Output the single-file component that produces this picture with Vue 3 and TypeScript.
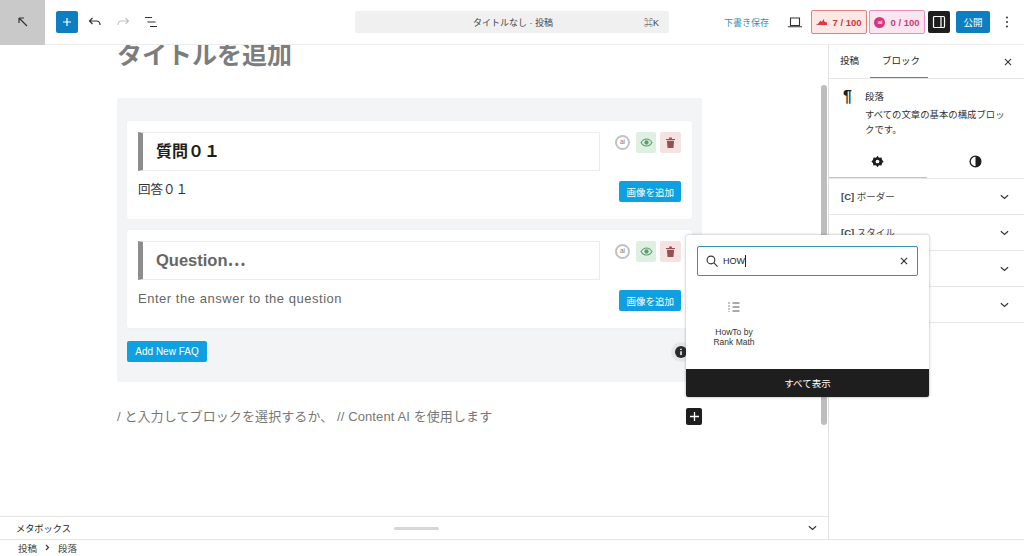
<script setup lang="ts">
const faqs = [
  { id: 1, question: '質問０１', answer: '回答０１', filled: true },
  { id: 2, question: 'Question⋯', answer: 'Enter the answer to the question', filled: false },
]
const panels = [
  { tag: '[C]', label: 'ボーダー' },
  { tag: '[C]', label: 'スタイル' },
  { tag: '', label: '' },
  { tag: '', label: '' },
]
</script>

<template>
  <div class="app">
    <header class="topbar">
      <div class="back">
        <svg width="12" height="12" viewBox="0 0 12 12"><path d="M2 2l8 8M2 2h5M2 2v5" fill="none" stroke="#333" stroke-width="1.2" /></svg>
      </div>
      <div class="tools">
        <button class="add">
          <svg width="10" height="10" viewBox="0 0 10 10"><path d="M5 1v8M1 5h8" stroke="#fff" stroke-width="1.2" /></svg>
        </button>
        <svg class="tool" width="16" height="14" viewBox="0 0 16 14"><path d="M5.500 3L2.500 6l3 3M2.500 6h7c2.500 0 3.500 1.500 3.500 4" fill="none" stroke="#333" stroke-width="1.2" /></svg>
        <svg class="tool" width="16" height="14" viewBox="0 0 16 14"><path d="M10.500 3l3 3-3 3M13.500 6h-7C4 6 3 7.500 3 10" fill="none" stroke="#c0c0c0" stroke-width="1.1" /></svg>
        <svg class="tool" width="16" height="14" viewBox="0 0 16 14"><path d="M2 2.500h7M4.500 7h8M7 11.500h7" fill="none" stroke="#333" stroke-width="1.2" /></svg>
      </div>
      <div class="command">
        <span class="command-title">タイトルなし · 投稿</span>
        <span class="command-key">⌘K</span>
      </div>
      <div class="actions">
        <span class="save">下書き保存</span>
        <svg class="laptop" width="14" height="11" viewBox="0 0 14 11"><path d="M2.500 1h9v7.500h-9zM0 9.800h14" fill="none" stroke="#333" stroke-width="1.1" /></svg>
        <div class="score score-red">
          <svg width="11" height="7" viewBox="0 0 13 8"><path d="M0 7l3-2 2-3 2 1 2-3 1 3 3 1v3z" fill="#e0363c" /></svg>
          <span>7 / 100</span>
        </div>
        <div class="score score-pink">
          <span class="ai-dot">ai</span>
          <span>0 / 100</span>
        </div>
        <div class="panel-toggle">
          <svg width="14" height="14" viewBox="0 0 14 14"><rect x="1.500" y="1.500" width="11" height="11" rx="1" fill="none" stroke="#fff" stroke-width="1.200" /><path d="M9 2v10" stroke="#fff" stroke-width="1.200" /></svg>
        </div>
        <button class="publish">公開</button>
        <svg class="more" width="4" height="12" viewBox="0 0 4 12"><circle cx="2" cy="1.500" r="1" /><circle cx="2" cy="6" r="1" /><circle cx="2" cy="10.500" r="1" /></svg>
      </div>
    </header>

    <div class="body">
      <div class="left">
        <main class="editor">
          <div class="content">
            <h1 class="title">タイトルを追加</h1>
            <section class="faq">
              <article v-for="faq in faqs" :key="faq.id" class="card">
                <div class="card-main">
                  <div class="question" :class="{ empty: !faq.filled }">{{ faq.question }}</div>
                  <div class="answer" :class="{ empty: !faq.filled }">{{ faq.answer }}</div>
                </div>
                <div class="card-side">
                  <div class="card-icons">
                    <span class="ai-grey">ai</span>
                    <span class="icon-box green">
                      <svg width="13" height="9" viewBox="0 0 14 10"><path d="M1 5c3-5.300 9-5.300 12 0-3 5.300-9 5.300-12 0z" fill="none" stroke="#5b9e6c" stroke-width="1.200" /><circle cx="7" cy="5" r="2.400" fill="#5b9e6c" /></svg>
                    </span>
                    <span class="icon-box red">
                      <svg width="9" height="11" viewBox="0 0 10 12"><path d="M0 2h10v1.200H0zM3.500 0.500h3V2h-3zM1 4h8l-.7 8H1.700z" fill="#96504f" /></svg>
                    </span>
                  </div>
                  <button class="blue-btn">画像を追加</button>
                </div>
              </article>
              <div class="faq-foot">
                <button class="blue-btn wide">Add New FAQ</button>
                <span class="info">
                  <svg width="12" height="12" viewBox="0 0 12 12"><circle cx="6" cy="6" r="6" fill="#2b2b2b" /><path d="M6 5.200v3.800M6 2.800v1.200" stroke="#fff" stroke-width="1.500" /></svg>
                </span>
              </div>
            </section>
            <div class="appender">
              <p class="placeholder">/ と入力してブロックを選択するか、 // Content AI を使用します</p>
              <button class="dark-plus">
                <svg width="9" height="9" viewBox="0 0 10 10"><path d="M5 0v10M0 5h10" stroke="#fff" stroke-width="1.400" /></svg>
              </button>
            </div>
          </div>
          <div class="scrolltrack"><div class="scrollthumb"></div></div>
        </main>
        <div class="metabox">
          <span>メタボックス</span>
          <span class="handle"></span>
          <svg class="meta-chevron" width="9" height="6" viewBox="0 0 10 6"><path d="M1 1l4 3.500L9 1" fill="none" stroke="#333" stroke-width="1.300" /></svg>
        </div>
      </div>

      <aside class="sidebar">
        <div class="tabs">
          <span class="tab">投稿</span>
          <span class="tab active">ブロック</span>
          <svg class="close" width="8" height="8" viewBox="0 0 9 9"><path d="M1 1l7 7M8 1L1 8" stroke="#333" stroke-width="1.200" /></svg>
        </div>
        <div class="block-card">
          <span class="pilcrow">¶</span>
          <div>
            <div class="block-name">段落</div>
            <div class="block-desc">すべての文章の基本の構成ブロックです。</div>
          </div>
        </div>
        <div class="subtabs">
          <div class="subtab active">
            <svg width="13" height="13" viewBox="0 0 14 14"><path d="M7 .8l1.600 2.200 2.700-.2.700 2.600L13.600 7 12 8.600l-.7 2.600-2.700-.2L7 13.200 5.400 11l-2.700.2L2 8.600.4 7 2 5.400l.7-2.600 2.700.2z" fill="#1e1e1e" /><circle cx="7" cy="7" r="2" fill="#fff" /></svg>
          </div>
          <div class="subtab">
            <svg width="13" height="13" viewBox="0 0 14 14"><circle cx="7" cy="7" r="5.800" fill="none" stroke="#1e1e1e" stroke-width="1.400" /><path d="M7 1.200a5.800 5.800 0 0 1 0 11.600z" fill="#1e1e1e" /></svg>
          </div>
        </div>
        <div v-for="(panel, i) in panels" :key="i" class="panel">
          <span class="panel-label"><b class="panel-tag">{{ panel.tag }}</b> {{ panel.label }}</span>
          <svg width="9" height="6" viewBox="0 0 10 6"><path d="M1 1l4 3.500L9 1" fill="none" stroke="#333" stroke-width="1.300" /></svg>
        </div>
      </aside>
    </div>

    <footer class="crumbs">
      <span>投稿</span>
      <svg width="5" height="7" viewBox="0 0 5 7"><path d="M1 .8l2.500 2.700L1 6.200" fill="none" stroke="#333" stroke-width="1.200" /></svg>
      <span>段落</span>
    </footer>

    <div class="inserter">
      <div class="search">
        <svg width="12" height="12" viewBox="0 0 14 14"><circle cx="5.800" cy="5.800" r="4.500" fill="none" stroke="#333" stroke-width="1.300" /><path d="M9 9l4.500 4.500" stroke="#333" stroke-width="1.300" /></svg>
        <span class="search-text">HOW<i class="caret"></i></span>
        <svg width="8" height="8" viewBox="0 0 9 9"><path d="M1 1l7 7M8 1L1 8" stroke="#333" stroke-width="1.300" /></svg>
      </div>
      <div class="results">
        <div class="result">
          <svg width="12" height="12" viewBox="0 0 12 12"><path d="M4.500 2h7M4.500 6h7M4.500 10h7" stroke="#555" stroke-width="1" /><path d="M1 1v10" stroke="#888" stroke-width="1" stroke-dasharray="2 1" /></svg>
          <span>HowTo by<br />Rank Math</span>
        </div>
      </div>
      <div class="show-all">すべて表示</div>
    </div>
  </div>
</template>

<style scoped>
.app {
  position: relative;
  width: 1024px;
  height: 556px;
  overflow: hidden;
  display: flex;
  flex-direction: column;
  background: #fff;
  color: #1e1e1e;
  font-family: "Liberation Sans", "Noto Sans CJK JP", sans-serif;
}

.topbar {
  position: relative;
  z-index: 2;
  flex: none;
  height: 45px;
  box-sizing: border-box;
  display: flex;
  align-items: center;
  background: #fff;
  border-bottom: 1px solid #ececec;
}

.back {
  width: 45px;
  height: 45px;
  flex: none;
  display: flex;
  align-items: center;
  justify-content: center;
  background: #c9c9c9;
}

.tools {
  width: 310px;
  flex: none;
  box-sizing: border-box;
  padding-left: 11px;
  display: flex;
  align-items: center;
}

.add {
  width: 22px;
  height: 22px;
  padding: 0;
  border: 0;
  border-radius: 2px;
  background: #0d7fc0;
  display: flex;
  align-items: center;
  justify-content: center;
}

.tool {
  margin-left: 9px;
  margin-right: 3px;
}

.command {
  width: 314px;
  height: 22px;
  flex: none;
  box-sizing: border-box;
  padding: 0 10px 0 118px;
  border-radius: 3px;
  background: #f0f0f0;
  display: flex;
  align-items: center;
  justify-content: space-between;
  font-size: 9px;
  color: #444;
}

.actions {
  flex: 1;
  display: flex;
  align-items: center;
  padding-left: 55px;
}

.save {
  font-size: 9px;
  color: #3a8fb7;
  margin-right: 19px;
  white-space: nowrap;
}

.laptop {
  margin-right: 9px;
}

.score {
  width: 56px;
  height: 24px;
  box-sizing: border-box;
  display: flex;
  align-items: center;
  justify-content: center;
  gap: 5px;
  border-radius: 2px;
  font-size: 9.5px;
  font-weight: 700;
  white-space: nowrap;
}

.score-red {
  margin-right: 2px;
  background: #fde8e6;
  border: 1px solid #e0807f;
  color: #c8383c;
}

.score-pink {
  margin-right: 3px;
  background: #fbe6f0;
  border: 1px solid #e58fb9;
  color: #c83a80;
}

.ai-dot {
  width: 11px;
  height: 11px;
  border-radius: 50%;
  background: #d3387f;
  color: #fff;
  font-size: 6px;
  font-weight: 400;
  display: flex;
  align-items: center;
  justify-content: center;
}

.panel-toggle {
  width: 22px;
  height: 22px;
  border-radius: 2px;
  background: #1e1e1e;
  display: flex;
  align-items: center;
  justify-content: center;
  margin-right: 6px;
}

.publish {
  width: 34px;
  height: 22px;
  padding: 0;
  border: 0;
  border-radius: 2px;
  background: #0d7fc0;
  color: #fff;
  font-family: inherit;
  font-size: 9.5px;
  margin-right: 15px;
}

.more {
  fill: #333;
}

.body {
  flex: 1;
  min-height: 0;
  display: flex;
}

.left {
  width: 828px;
  flex: none;
  display: flex;
  flex-direction: column;
}

.editor {
  flex: 1;
  min-height: 0;
  display: flex;
}

.content {
  flex: 1;
  min-width: 0;
  padding-left: 117px;
}

.title {
  margin: 0;
  font-size: 25px;
  line-height: 21px;
  font-weight: 700;
  color: #7d7d7d;
}

.faq {
  width: 585px;
  height: 284px;
  box-sizing: border-box;
  margin-top: 32px;
  padding: 23px 10px 0;
  background: #f3f4f6;
  border-radius: 2px;
}

.card {
  height: 98px;
  box-sizing: border-box;
  margin-bottom: 11px;
  padding: 11px 11px 0;
  background: #fff;
  border-radius: 3px;
  display: flex;
  box-shadow: 0 0 2px rgba(0, 0, 0, 0.04);
}

.card-main {
  width: 462px;
  flex: none;
}

.question {
  height: 39px;
  box-sizing: border-box;
  padding-left: 13px;
  border: 1px solid #ececec;
  border-left: 5px solid #8d8d8d;
  font-size: 16px;
  font-weight: 700;
  line-height: 37px;
}

.question.empty {
  color: #666;
  font-size: 16.5px;
}

.answer {
  margin-top: 11px;
  font-size: 12.5px;
  line-height: 16px;
  color: #333;
}

.answer.empty {
  color: #666;
  font-size: 13px;
  letter-spacing: 0.53px;
}

.card-side {
  flex: 1;
  display: flex;
  flex-direction: column;
  align-items: flex-end;
}

.card-icons {
  display: flex;
  align-items: center;
  gap: 4px;
}

.ai-grey {
  width: 15px;
  height: 15px;
  margin-right: 2px;
  border-radius: 50%;
  background: #fff;
  border: 2px solid #c2c2c2;
  box-sizing: border-box;
  color: #777;
  font-size: 6.5px;
  line-height: 1;
  display: flex;
  align-items: center;
  justify-content: center;
}

.icon-box {
  width: 20px;
  height: 21px;
  border-radius: 2px;
  display: flex;
  align-items: center;
  justify-content: center;
}

.green {
  background: #dff0e2;
}

.red {
  background: #f5e3e3;
  width: 21px;
}

.blue-btn {
  height: 21px;
  padding: 0 7px;
  border: 0;
  border-radius: 2px;
  background: #0ea0e0;
  color: #fff;
  font-family: inherit;
  font-size: 9.5px;
  white-space: nowrap;
}

.blue-btn.wide {
  width: 80px;
  padding: 0;
  font-size: 10px;
}

.card-side .blue-btn {
  margin-top: 28px;
}

.faq-foot {
  margin-top: 13px;
  display: flex;
  align-items: center;
  justify-content: space-between;
}

.info {
  width: 20px;
  height: 20px;
  margin-right: 1px;
  border-radius: 50%;
  background: #e6e6e6;
  display: flex;
  align-items: center;
  justify-content: center;
}

.appender {
  width: 585px;
  margin-top: 23px;
  display: flex;
  align-items: center;
  justify-content: space-between;
}

.placeholder {
  margin: 0;
  font-size: 13px;
  letter-spacing: 0.1px;
  line-height: 24px;
  color: #777;
}

.dark-plus {
  width: 16px;
  height: 17px;
  margin-top: -2px;
  padding: 0;
  border: 0;
  border-radius: 2px;
  background: #1e1e1e;
  display: flex;
  align-items: center;
  justify-content: center;
}

.scrolltrack {
  width: 7px;
  flex: none;
  padding-top: 40px;
}

.scrollthumb {
  width: 6px;
  height: 340px;
  border-radius: 3px;
  background: #bdbdbd;
}

.metabox {
  flex: none;
  height: 23px;
  box-sizing: border-box;
  padding: 0 11px 0 16px;
  border-top: 1px solid #e6e6e6;
  display: grid;
  grid-template-columns: 1fr auto 1fr;
  align-items: center;
  font-size: 9.2px;
}

.handle {
  width: 45px;
  height: 3px;
  border-radius: 2px;
  background: #d6d6d6;
}

.meta-chevron {
  justify-self: end;
}

.sidebar {
  flex: 1;
  min-width: 0;
  border-left: 1px solid #e0e0e0;
  background: #fff;
}

.tabs {
  height: 33px;
  display: flex;
  align-items: center;
  font-size: 9.5px;
  border-bottom: 1px solid #e6e6e6;
}

.tab {
  height: 33px;
  line-height: 32px;
  box-sizing: border-box;
  padding: 0 11px;
}

.tab.active {
  width: 58px;
  padding: 0 0 0 12px;
  border-bottom: 1.5px solid #3a8fb7;
}

.close {
  margin-left: auto;
  margin-right: 12px;
}

.block-card {
  display: flex;
  height: 66px;
  box-sizing: border-box;
  padding: 10px 12px 0 14px;
  font-size: 9.4px;
  line-height: 15px;
}

.pilcrow {
  width: 22px;
  flex: none;
  font-size: 16px;
  font-weight: 700;
}

.block-desc {
  margin-top: 3px;
  color: #333;
}

.subtabs {
  height: 34px;
  box-sizing: border-box;
  display: flex;
  border-bottom: 1px solid #e6e6e6;
}

.subtab {
  width: 98px;
  box-sizing: border-box;
  display: flex;
  align-items: center;
  justify-content: center;
}

.subtab.active {
  border-bottom: 1.5px solid #a8cfe0;
}

.panel {
  height: 36px;
  box-sizing: border-box;
  padding: 0 15px 0 12px;
  border-bottom: 1px solid #e6e6e6;
  display: flex;
  align-items: center;
  justify-content: space-between;
  font-size: 9.5px;
  color: #444;
}

.panel-label {
  margin-bottom: 2px;
}

.panel-tag {
  font-weight: 700;
}

.crumbs {
  flex: none;
  height: 17px;
  box-sizing: border-box;
  padding: 0 0 1px 18px;
  border-top: 1px solid #e6e6e6;
  display: flex;
  align-items: center;
  gap: 8px;
  font-size: 9.5px;
  color: #444;
}

.inserter {
  position: absolute;
  left: 686px;
  top: 235px;
  width: 243px;
  height: 162px;
  display: flex;
  flex-direction: column;
  background: #fff;
  border-radius: 2px;
  box-shadow: 0 0 3px rgba(0, 0, 0, 0.35);
  overflow: hidden;
}

.search {
  height: 28px;
  flex: none;
  margin: 11px 11px 0;
  padding: 0 9px 0 8px;
  border: 1.5px solid #3a8fb7;
  border-radius: 2px;
  display: flex;
  align-items: center;
  gap: 5px;
  font-size: 9px;
}

.search-text {
  flex: 1;
  display: flex;
  align-items: center;
}

.caret {
  width: 1px;
  height: 12px;
  background: #1e1e1e;
}

.results {
  flex: 1;
  padding: 25px 0 0 5px;
}

.result {
  width: 86px;
  display: flex;
  flex-direction: column;
  align-items: center;
  gap: 14px;
  font-size: 8.5px;
  line-height: 10px;
  text-align: center;
  color: #333;
}

.show-all {
  height: 28px;
  flex: none;
  background: #1e1e1e;
  color: #fff;
  font-size: 9.5px;
  display: flex;
  align-items: center;
  justify-content: center;
}
</style>
